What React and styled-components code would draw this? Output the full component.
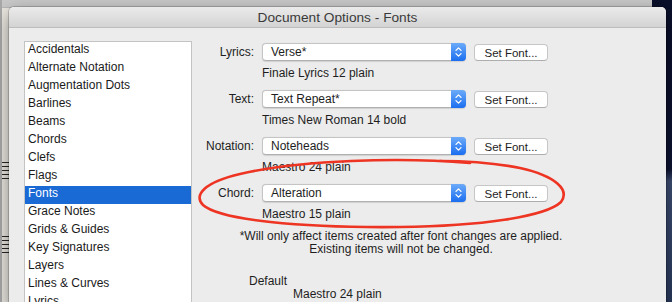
import React from 'react'
import styled, { createGlobalStyle } from 'styled-components'

const GlobalStyle = createGlobalStyle`
  html, body {
    margin: 0;
    padding: 0;
  }
  body {
    width: 672px;
    height: 302px;
    overflow: hidden;
    font-family: "Liberation Sans", Arial, sans-serif;
    -webkit-font-smoothing: antialiased;
  }
`

const Desktop = styled.div`
  position: relative;
  width: 672px;
  height: 302px;
  overflow: hidden;
  background: linear-gradient(180deg, #0a0f2a 0%, #0d1332 56%, #3e4e74 60%, #2a3a5e 100%);
`

const ScoreWindow = styled.div`
  position: absolute;
  left: 0;
  top: 0;
  width: 652px;
  height: 302px;
  box-sizing: border-box;
  border-left: 2px solid #a9a9a9;
  background: #ebe8e1;
  display: flex;
  flex-direction: column;
`

const ScoreTitle = styled.div`
  height: 7px;
  background: #c9c9c9;
  border-bottom: 1px solid #b9b9b9;
`

const Staff = styled.div`
  margin-top: ${p => p.offset}px;
  width: 8px;
  height: 17px;
  background: repeating-linear-gradient(180deg, #262626 0 1px, transparent 1px 4px);
`

const Dialog = styled.div`
  position: absolute;
  left: 9px;
  top: 7px;
  width: 657px;
  height: 300px;
  background: #ececec;
  border-radius: 5px 5px 0 0;
  box-shadow: 0 0 0 1px rgba(0, 0, 0, 0.18), 0 6px 18px rgba(0, 0, 0, 0.45);
  overflow: hidden;
  display: flex;
  flex-direction: column;
`

const TitleBar = styled.div`
  height: 21px;
  flex-shrink: 0;
  display: flex;
  align-items: center;
  justify-content: center;
  padding-top: 1px;
  box-sizing: border-box;
  background: linear-gradient(180deg, #ebebeb, #d3d3d3);
  border-bottom: 1px solid #bdbdbd;
  font-size: 13.7px;
  color: #3a3a3a;
`

const Body = styled.div`
  flex: 1;
  display: flex;
  align-items: flex-start;
  padding: 13px 0 0 15px;
`

const CategoryList = styled.ul`
  list-style: none;
  margin: 0;
  padding: 0;
  width: 168px;
  height: 270px;
  flex-shrink: 0;
  box-sizing: border-box;
  background: #fff;
  border: 1px solid #c3c3c3;
  border-bottom: none;
  overflow: hidden;
`

const Category = styled.li`
  height: 18px;
  line-height: 15px;
  padding-left: 3px;
  font-size: 12px;
  color: ${p => (p.selected ? '#fff' : '#1a1a1a')};
  background: ${p => (p.selected ? '#1a6ad6' : 'transparent')};
`

const Panel = styled.div`
  width: 418px;
  margin-top: 1px;
  font-size: 12px;
  color: #1e1e1e;
`

const FontRow = styled.div`
  display: grid;
  grid-template-columns: 62px 204px 74px;
  column-gap: 8px;
  row-gap: 5px;
  align-items: center;
  margin-bottom: 9px;
`

const Label = styled.div`
  text-align: right;
  line-height: 18px;
`

const Popup = styled.div`
  height: 18px;
  box-sizing: border-box;
  display: flex;
  align-items: stretch;
  background: #fff;
  border: 1px solid #c4c4c4;
  border-bottom-color: #b0b0b0;
  border-radius: 4px;
  box-shadow: 0 0.5px 1px rgba(0, 0, 0, 0.12);
`

const PopupValue = styled.div`
  flex: 1;
  padding-left: 8px;
  line-height: 16px;
`

const Stepper = styled.div`
  width: 15px;
  margin: -1px -1px -1px 0;
  border-radius: 0 4px 4px 0;
  background: linear-gradient(180deg, #6cabf9, #1b6ef0);
  display: flex;
  align-items: center;
  justify-content: center;
`

const Button = styled.div`
  height: 17px;
  margin-top: 2px;
  box-sizing: border-box;
  display: flex;
  align-items: center;
  justify-content: center;
  background: #fff;
  border: 1px solid #c6c6c6;
  border-bottom-color: #adadad;
  border-radius: 4px;
  font-size: 11.5px;
  color: #1e1e1e;
`

const Description = styled.div`
  grid-column: 2 / 4;
  line-height: 14px;
`

const Footnote = styled.p`
  margin: 4px 0 0;
  text-align: center;
  line-height: 13px;
`

const DefaultLine = styled.div`
  line-height: 13px;
  padding-left: ${p => p.indent}px;
  margin-top: ${p => p.gap || 0}px;
`

const Annotation = styled.svg`
  position: absolute;
  left: 0;
  top: 0;
  pointer-events: none;
`

const categories = [
  'Accidentals',
  'Alternate Notation',
  'Augmentation Dots',
  'Barlines',
  'Beams',
  'Chords',
  'Clefs',
  'Flags',
  'Fonts',
  'Grace Notes',
  'Grids & Guides',
  'Key Signatures',
  'Layers',
  'Lines & Curves',
  'Lyrics',
]

const fontRows = [
  { label: 'Lyrics:', value: 'Verse*', desc: 'Finale Lyrics 12 plain' },
  { label: 'Text:', value: 'Text Repeat*', desc: 'Times New Roman 14 bold' },
  { label: 'Notation:', value: 'Noteheads', desc: 'Maestro 24 plain' },
  { label: 'Chord:', value: 'Alteration', desc: 'Maestro 15 plain' },
]

const Chevrons = () => (
  <svg width="15" height="18" viewBox="0 0 15 18">
    <path d="M5 7.4 L7.5 4.9 L10 7.4 M5 10.6 L7.5 13.1 L10 10.6"
      fill="none" stroke="#fff" strokeWidth="1.3" strokeLinecap="round" strokeLinejoin="round" />
  </svg>
)

const App = () => (
  <Desktop>
    <GlobalStyle />
    <ScoreWindow>
      <ScoreTitle />
      <Staff offset={154} />
      <Staff offset={57} />
    </ScoreWindow>
    <Dialog>
      <TitleBar>Document Options - Fonts</TitleBar>
      <Body>
        <CategoryList>
          {categories.map(c => (
            <Category key={c} selected={c === 'Fonts'}>{c}</Category>
          ))}
        </CategoryList>
        <Panel>
          {fontRows.map(r => (
            <FontRow key={r.label}>
              <Label>{r.label}</Label>
              <Popup>
                <PopupValue>{r.value}</PopupValue>
                <Stepper><Chevrons /></Stepper>
              </Popup>
              <Button>Set Font...</Button>
              <Description>{r.desc}</Description>
            </FontRow>
          ))}
          <Footnote>
            *Will only affect items created after font changes are applied.<br />
            Existing items will not be changed.
          </Footnote>
          <DefaultLine indent={57} gap={19}>Default</DefaultLine>
          <DefaultLine indent={101}>Maestro 24 plain</DefaultLine>
        </Panel>
      </Body>
    </Dialog>
    <Annotation width="672" height="302" viewBox="0 0 672 302">
      <path
        d="M470 163 C 400 157, 300 160, 240 174 C 205 182, 193 195, 203 205 C 220 220, 300 228, 400 227 C 480 226, 545 217, 561 202 C 570 190, 556 176, 520 168 C 495 163, 470 161, 440 161"
        fill="none" stroke="#ee3422" strokeWidth="2.6" strokeLinecap="round" />
    </Annotation>
  </Desktop>
)

export default App
